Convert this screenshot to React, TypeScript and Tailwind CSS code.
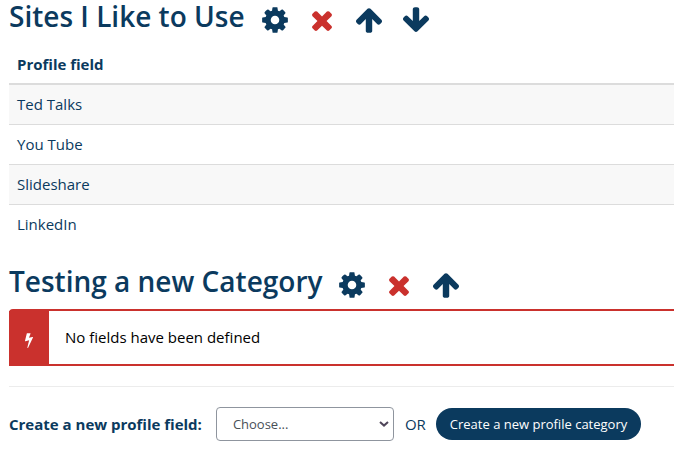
import type { ReactNode } from "react";

const icons = {
  cog: "M1152 896q0-106-75-181t-181-75-181 75-75 181 75 181 181 75 181-75 75-181zm512-109v222q0 12-8 23t-20 13l-185 28q-19 54-39 91 35 50 107 138 10 12 10 25t-9 23q-27 37-99 108t-94 71q-12 0-26-9l-138-108q-44 23-91 38-16 136-29 186-7 28-36 28h-222q-14 0-24.5-8.5t-11.5-21.5l-28-184q-49-16-90-37l-141 107q-10 9-25 9-14 0-25-11-126-114-165-168-7-10-7-23 0-12 8-23 15-21 51-66.5t54-70.5q-27-50-41-99l-183-27q-13-2-21-12.5t-8-23.5v-222q0-12 8-23t19-13l186-28q14-46 39-92-40-57-107-138-10-12-10-24 0-10 9-23 26-36 98.5-107.5t94.5-71.5q13 0 26 10l138 107q44-23 91-38 16-136 29-186 7-28 36-28h222q14 0 24.5 8.5t11.5 21.5l28 184q49 16 90 37l142-107q9-9 24-9 13 0 25 10 129 119 165 170 7 8 7 22 0 12-8 23-15 21-51 66.5t-54 70.5q26 50 41 98l183 28q13 2 21 12.5t8 23.5z",
  times:
    "M1490 1322q0 40-28 68l-136 136q-28 28-68 28t-68-28l-294-294-294 294q-28 28-68 28t-68-28l-136-136q-28-28-28-68t28-68l294-294-294-294q-28-28-28-68t28-68l136-136q28-28 68-28t68 28l294 294 294-294q28-28 68-28t68 28l136 136q28 28 28 68t-28 68l-294 294 294 294q28 28 28 68z",
  up: "M1675 971q0 51-37 90l-75 75q-38 38-91 38-54 0-90-38l-294-293v704q0 52-37.5 84.5t-90.5 32.5h-128q-53 0-90.5-32.5t-37.5-84.5v-704l-294 293q-36 38-90 38t-90-38l-75-75q-38-38-38-90 0-53 38-91l651-651q35-37 90-37 54 0 91 37l651 651q37 39 37 91z",
  down: "M1675 832q0 53-37 90l-651 652q-39 37-91 37-53 0-90-37l-651-652q-38-36-38-90 0-53 38-91l74-75q39-37 91-37 53 0 90 37l294 294v-704q0-52 38-90t90-38h128q52 0 90 38t38 90v704l294-294q37-37 90-37 52 0 91 37l75 75q37 39 37 91z",
  bolt: "M1333 566q18 20 7 44l-540 1157q-13 25-42 25-4 0-14-2-17-5-25.5-19t-4.5-30l197-808-406 101q-4 1-12 1-18 0-31-11-18-15-13-39l201-825q4-14 16-23t28-9h328q19 0 32 12.5t13 29.5q0 8-5 18l-171 463 396-98q8-2 12-2 19 0 34 15z",
};

type IconName = keyof typeof icons;

const Icon = ({ name, className }: { name: IconName; className: string }) => (
  <svg
    viewBox="0 0 1792 1792"
    fill="currentColor"
    className={className}
    aria-hidden="true"
  >
    <path d={icons[name]} />
  </svg>
);

const actionLabels: Record<IconName, string> = {
  cog: "Edit",
  times: "Delete",
  up: "Move up",
  down: "Move down",
  bolt: "Alert",
};

const Category = ({
  title,
  actions,
  children,
}: {
  title: string;
  actions: IconName[];
  children: ReactNode;
}) => (
  <section>
    <div className="flex items-start gap-[15px] h-11">
      <h2 className="text-[28px] leading-8 font-semibold whitespace-nowrap">
        {title}
      </h2>
      <div className="flex gap-[17px] pt-[5px]">
        {actions.map((name) => (
          <button
            key={name}
            aria-label={actionLabels[name]}
            className={`cursor-pointer ${
              name == "times" ? "text-[#ca312d]" : ""
            }`}
          >
            <Icon name={name} className="size-[30px]" />
          </button>
        ))}
      </div>
    </div>
    {children}
  </section>
);

const fields = ["Ted Talks", "You Tube", "Slideshare", "LinkedIn"];

export default function App() {
  return (
    <main className="pl-[9px] pb-3 font-['Open_Sans','Noto_Sans',sans-serif] text-[15px] leading-6 text-[#0b3a5e]">
      <Category title="Sites I Like to Use" actions={["cog", "times", "up", "down"]}>
        <table className="w-full mb-[21px] text-left border-collapse">
          <thead>
            <tr className="h-10 border-b-2 border-[#dcdcdc]">
              <th className="px-2 font-bold">Profile field</th>
            </tr>
          </thead>
          <tbody>
            {fields.map((field) => (
              <tr
                key={field}
                className="h-10 odd:bg-[#f8f8f8] border-b border-[#dcdcdc] last:border-b-0"
              >
                <td className="px-2">{field}</td>
              </tr>
            ))}
          </tbody>
        </table>
      </Category>
      <Category title="Testing a new Category" actions={["cog", "times", "up"]}>
        <div className="flex border-y-2 border-[#ca312d] rounded-tl-sm text-black">
          <div className="flex items-center justify-center w-10 pt-1 bg-[#ca312d] text-white">
            <Icon name="bolt" className="size-4" />
          </div>
          <p className="px-4 pt-[14px] pb-[15px]">No fields have been defined</p>
        </div>
      </Category>
      <hr className="my-5 border-[#ececec]" />
      <form className="flex items-center whitespace-nowrap">
        <label htmlFor="datatype" className="font-bold mr-[14px]">
          Create a new profile field:
        </label>
        <div className="relative mr-[11px]">
          <select
            id="datatype"
            className="appearance-none block w-[178px] h-[34px] px-4 border border-[#8f959e] rounded-sm bg-white text-[13px] text-[#495057]"
          >
            <option>Choose...</option>
          </select>
          <svg
            viewBox="0 0 10 6"
            className="absolute right-[5px] top-[14px] w-[10px] h-[6px] pointer-events-none"
            fill="none"
            stroke="#50465a"
            strokeWidth="2"
          >
            <path d="M1 1l4 3.6L9 1" />
          </svg>
        </div>
        <span className="mr-[10px]">OR</span>
        <button
          type="button"
          className="h-8 px-[14px] rounded-full bg-[#0b3a5e] text-white text-[13px] cursor-pointer"
        >
          Create a new profile category
        </button>
      </form>
    </main>
  );
}
